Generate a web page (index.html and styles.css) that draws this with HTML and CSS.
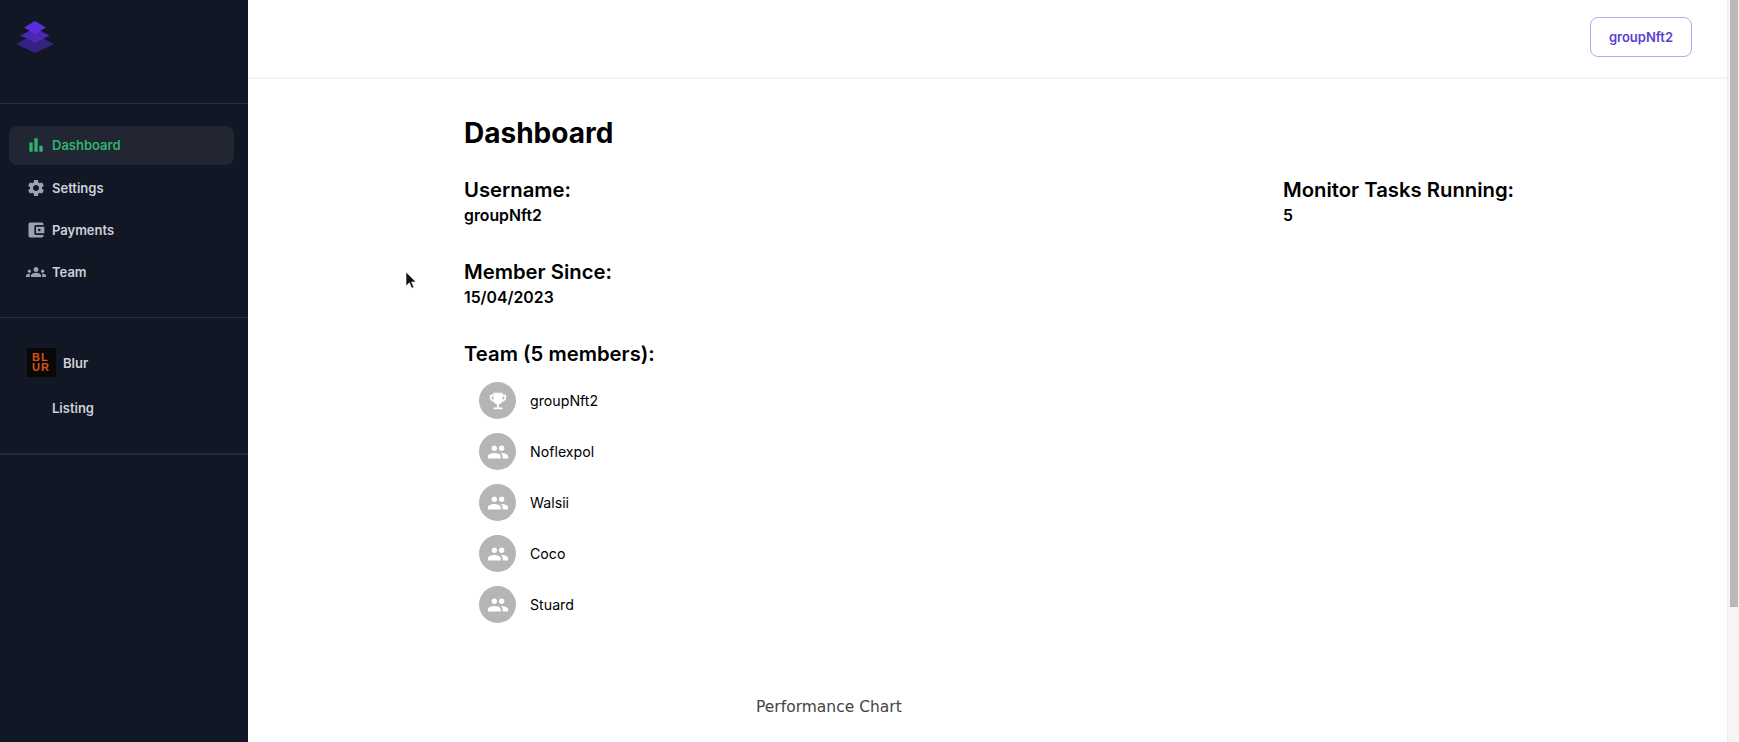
FILE: index.html
```html
<!DOCTYPE html>
<html lang="en">
<head>
    <meta charset="UTF-8">
    <meta name="viewport" content="width=device-width, initial-scale=1.0">
    <title>Dashboard</title>
    <link rel="stylesheet" href="styles.css">
</head>
<body>
    <div class="app">
        <aside class="sidebar">
            <div class="logo-box">
                <svg class="logo" viewBox="0 0 40 32" width="40" height="32">
                    <polygon points="20,13 39,23 20,32 1,23" fill="#35217f"/>
                    <polygon points="20,7 34.5,14.5 20,22 5.5,14.5" fill="#4a27b5"/>
                    <polygon points="20,0 31,6.5 20,13 9,6.5" fill="#5b2de0"/>
                </svg>
            </div>

            <nav class="nav-group">
                <a class="nav-item active">
                    <svg class="nav-icon" viewBox="0 0 24 24"><path d="M4 9h4v11H4zM10 4h4v16h-4zM16 13h4v7h-4z"/></svg>
                    Dashboard
                </a>
                <a class="nav-item">
                    <svg class="nav-icon" viewBox="0 0 24 24"><path d="M19.14 12.94c.04-.3.06-.61.06-.94 0-.32-.02-.64-.07-.94l2.03-1.58c.18-.14.23-.41.12-.61l-1.92-3.32c-.12-.22-.37-.29-.59-.22l-2.39.96c-.5-.38-1.03-.7-1.62-.94l-.36-2.54c-.04-.24-.24-.41-.48-.41h-3.84c-.24 0-.43.17-.47.41l-.36 2.54c-.59.24-1.13.57-1.62.94l-2.39-.96c-.22-.08-.47 0-.59.22L2.74 8.87c-.12.21-.08.47.12.61l2.03 1.58c-.05.3-.09.63-.09.94s.02.64.07.94l-2.03 1.58c-.18.14-.23.41-.12.61l1.92 3.32c.12.22.37.29.59.22l2.39-.96c.5.38 1.03.7 1.62.94l.36 2.54c.05.24.24.41.48.41h3.84c.24 0 .44-.17.47-.41l.36-2.54c.59-.24 1.13-.56 1.62-.94l2.39.96c.22.08.47 0 .59-.22l1.92-3.32c.12-.22.07-.47-.12-.61l-2.01-1.58zM12 15.6c-1.98 0-3.6-1.62-3.6-3.6s1.62-3.6 3.6-3.6 3.6 1.62 3.6 3.6-1.62 3.6-3.6 3.6z"/></svg>
                    Settings
                </a>
                <a class="nav-item">
                    <svg class="nav-icon" viewBox="0 0 24 24"><path d="M21 18v1c0 1.1-.9 2-2 2H5c-1.11 0-2-.9-2-2V5c0-1.1.89-2 2-2h14c1.1 0 2 .9 2 2v1h-9c-1.11 0-2 .9-2 2v8c0 1.1.89 2 2 2h9zm-9-2h10V8H12v8zm4-2.5c-.83 0-1.5-.67-1.5-1.5s.67-1.5 1.5-1.5 1.5.67 1.5 1.5-.67 1.5-1.5 1.5z"/></svg>
                    Payments
                </a>
                <a class="nav-item">
                    <svg class="nav-icon" viewBox="0 0 24 24"><path d="M12 12.75c1.63 0 3.07.39 4.24.9 1.08.48 1.76 1.56 1.76 2.73V18H6v-1.61c0-1.18.68-2.26 1.76-2.73 1.17-.52 2.61-.91 4.24-.91zM4 13c1.1 0 2-.9 2-2s-.9-2-2-2-2 .9-2 2 .9 2 2 2zm1.13 1.1c-.37-.06-.74-.1-1.13-.1-.99 0-1.93.21-2.78.58C.48 14.9 0 15.62 0 16.43V18h4.5v-1.61c0-.83.23-1.61.63-2.29zM20 13c1.1 0 2-.9 2-2s-.9-2-2-2-2 .9-2 2 .9 2 2 2zm4 3.43c0-.81-.48-1.53-1.22-1.85-.85-.37-1.79-.58-2.78-.58-.39 0-.76.04-1.13.1.4.68.63 1.46.63 2.29V18H24v-1.57zM12 12c1.66 0 3-1.34 3-3s-1.34-3-3-3-3 1.34-3 3 1.34 3 3 3z"/></svg>
                    Team
                </a>
            </nav>

            <div class="market-group">
                <div class="market-head">
                    <span class="blur-logo">BL<br>UR</span>
                    Blur
                </div>
                <a class="market-link">Listing</a>
            </div>
        </aside>

        <div class="main">
            <header class="topbar">
                <button class="user-btn">groupNft2</button>
            </header>

            <section class="content">
                <h1>Dashboard</h1>
                <div class="info-grid">
                    <div class="info-col">
                        <div class="info-block">
                            <h2>Username:</h2>
                            <p>groupNft2</p>
                        </div>
                        <div class="info-block">
                            <h2>Member Since:</h2>
                            <p>15/04/2023</p>
                        </div>
                        <div class="info-block">
                            <h2>Team (5 members):</h2>
                            <ul class="team-list">
                                <li>
                                    <span class="avatar"><svg viewBox="0 0 24 24"><path d="M19 5h-2V3H7v2H5c-1.1 0-2 .9-2 2v1c0 2.55 1.92 4.63 4.39 4.94.63 1.5 1.98 2.63 3.61 2.96V19H7v2h10v-2h-4v-3.1c1.63-.33 2.98-1.46 3.61-2.96C19.08 12.63 21 10.55 21 8V7c0-1.1-.9-2-2-2zM5 8V7h2v3.82C5.84 10.4 5 9.3 5 8zm14 0c0 1.3-.84 2.4-2 2.82V7h2v1z"/></svg></span>
                                    groupNft2
                                </li>
                                <li>
                                    <span class="avatar"><svg viewBox="0 0 24 24"><path d="M16 11c1.66 0 2.99-1.34 2.99-3S17.66 5 16 5s-3 1.34-3 3 1.34 3 3 3zm-8 0c1.66 0 2.99-1.34 2.99-3S9.66 5 8 5 5 6.34 5 8s1.34 3 3 3zm0 2c-2.33 0-7 1.17-7 3.5V19h14v-2.5c0-2.33-4.67-3.5-7-3.5zm8 0c-.29 0-.62.02-.97.05 1.16.84 1.97 1.97 1.97 3.45V19h6v-2.5c0-2.33-4.67-3.5-7-3.5z"/></svg></span>
                                    Noflexpol
                                </li>
                                <li>
                                    <span class="avatar"><svg viewBox="0 0 24 24"><path d="M16 11c1.66 0 2.99-1.34 2.99-3S17.66 5 16 5s-3 1.34-3 3 1.34 3 3 3zm-8 0c1.66 0 2.99-1.34 2.99-3S9.66 5 8 5 5 6.34 5 8s1.34 3 3 3zm0 2c-2.33 0-7 1.17-7 3.5V19h14v-2.5c0-2.33-4.67-3.5-7-3.5zm8 0c-.29 0-.62.02-.97.05 1.16.84 1.97 1.97 1.97 3.45V19h6v-2.5c0-2.33-4.67-3.5-7-3.5z"/></svg></span>
                                    Walsii
                                </li>
                                <li>
                                    <span class="avatar"><svg viewBox="0 0 24 24"><path d="M16 11c1.66 0 2.99-1.34 2.99-3S17.66 5 16 5s-3 1.34-3 3 1.34 3 3 3zm-8 0c1.66 0 2.99-1.34 2.99-3S9.66 5 8 5 5 6.34 5 8s1.34 3 3 3zm0 2c-2.33 0-7 1.17-7 3.5V19h14v-2.5c0-2.33-4.67-3.5-7-3.5zm8 0c-.29 0-.62.02-.97.05 1.16.84 1.97 1.97 1.97 3.45V19h6v-2.5c0-2.33-4.67-3.5-7-3.5z"/></svg></span>
                                    Coco
                                </li>
                                <li>
                                    <span class="avatar"><svg viewBox="0 0 24 24"><path d="M16 11c1.66 0 2.99-1.34 2.99-3S17.66 5 16 5s-3 1.34-3 3 1.34 3 3 3zm-8 0c1.66 0 2.99-1.34 2.99-3S9.66 5 8 5 5 6.34 5 8s1.34 3 3 3zm0 2c-2.33 0-7 1.17-7 3.5V19h14v-2.5c0-2.33-4.67-3.5-7-3.5zm8 0c-.29 0-.62.02-.97.05 1.16.84 1.97 1.97 1.97 3.45V19h6v-2.5c0-2.33-4.67-3.5-7-3.5z"/></svg></span>
                                    Stuard
                                </li>
                            </ul>
                        </div>
                    </div>
                    <div class="info-col">
                        <div class="info-block">
                            <h2>Monitor Tasks Running:</h2>
                            <p>5</p>
                        </div>
                    </div>
                </div>
                <div class="chart-title">Performance Chart</div>
            </section>
        </div>

        <div class="scrollbar"><div class="scroll-thumb"></div></div>
    </div>

    <svg class="cursor" viewBox="0 0 12 18" width="12" height="18">
        <path d="M1 0v14l3.4-3.2 2.3 5.4 2.2-1-2.3-5.2H11z" fill="#111" stroke="#fff" stroke-width=".6"/>
    </svg>
</body>
</html>
```

FILE: styles.css
```css
* {
    box-sizing: border-box;
}
html, body {
    height: 100%;
}
body {
    margin: 0;
    overflow: hidden;
    background-color: #fff;
    font-family: Inter, "Liberation Sans", sans-serif;
    color: #000;
}
.app {
    display: flex;
    height: 100vh;
}

/* sidebar */
.sidebar {
    width: 248px;
    flex-shrink: 0;
    background-color: #121725;
    color: #cdd0d8;
    font-size: 13px;
    font-weight: 600;
}
.logo-box {
    height: 104px;
    padding: 21px 0 0 15px;
    border-bottom: 1px solid #2a2f3d;
}
.logo {
    display: block;
}
.nav-group {
    height: 214px;
    padding: 22px 14px 0 9px;
    border-bottom: 1px solid #2a2f3d;
    display: flex;
    flex-direction: column;
    gap: 3px;
}
.nav-item {
    height: 39px;
    display: flex;
    align-items: center;
    gap: 6px;
    padding-left: 17px;
    border-radius: 8px;
}
.nav-item.active {
    background-color: #212632;
    color: #2fb36f;
    padding-bottom: 2px;
}
.nav-icon {
    width: 20px;
    height: 20px;
    fill: #9ea2ae;
    flex-shrink: 0;
}
.active .nav-icon {
    fill: #2fb36f;
}
.market-group {
    height: 137px;
    padding: 30px 0 0 27px;
    border-bottom: 2px solid #232835;
}
.market-head {
    display: flex;
    align-items: center;
    gap: 7px;
    height: 29px;
}
.blur-logo {
    width: 29px;
    height: 29px;
    background-color: #0a0707;
    color: #d9521c;
    font-family: "Liberation Sans", sans-serif;
    font-size: 11px;
    font-weight: 700;
    line-height: 10px;
    letter-spacing: 1px;
    padding: 4px 0 0 5px;
}
.market-link {
    display: block;
    margin: 23px 0 0 25px;
}

/* top bar */
.main {
    flex: 1;
    min-width: 0;
}
.topbar {
    height: 79px;
    display: flex;
    justify-content: flex-end;
    align-items: flex-start;
    padding: 17px 47px 0 0;
    border-bottom: 2px solid #f3f3f5;
}
.user-btn {
    width: 102px;
    height: 40px;
    background-color: #fff;
    border: 1px solid #b5a8f5;
    border-radius: 8px;
    color: #5b3fd1;
    font-family: inherit;
    font-size: 13px;
    font-weight: 600;
}

/* content */
.content {
    padding: 35px 0 0 216px;
}
h1 {
    margin: 0 0 25px;
    font-size: 28px;
    line-height: 38px;
    font-weight: 700;
}
.info-grid {
    display: grid;
    grid-template-columns: 819px 1fr;
}
.info-block {
    margin-bottom: 31px;
}
.info-block:last-child {
    margin-bottom: 0;
}
h2 {
    margin: 0;
    font-size: 20.3px;
    line-height: 26px;
    font-weight: 600;
}
.info-block p {
    margin: 0;
    font-size: 15.8px;
    line-height: 25px;
    font-weight: 600;
}
.team-list {
    list-style: none;
    margin: 15px 0 0;
    padding: 0 0 0 15px;
    display: flex;
    flex-direction: column;
    gap: 14px;
    font-size: 14.2px;
}
.team-list li {
    display: flex;
    align-items: center;
    gap: 14px;
}
.avatar {
    width: 37px;
    height: 37px;
    border-radius: 50%;
    background-color: #b5b5b5;
    display: flex;
    align-items: center;
    justify-content: center;
}
.avatar svg {
    width: 22px;
    height: 22px;
    fill: #fff;
}
.chart-title {
    margin: 74px 0 0 292px;
    font-family: "DejaVu Sans", sans-serif;
    font-size: 15.5px;
    line-height: 20px;
    color: #444;
}

/* fake window scrollbar, screenshot shows one */
.scrollbar {
    position: absolute;
    top: 0;
    right: 0;
    width: 12px;
    height: 100%;
    background-color: #f5f5f5;
    border-left: 1px solid #ececec;
}
.scroll-thumb {
    width: 8px;
    height: 607px;
    margin-left: 2px;
    background-color: #b8b8b8;
}
.cursor {
    position: absolute;
    left: 405px;
    top: 272px;
}
```
